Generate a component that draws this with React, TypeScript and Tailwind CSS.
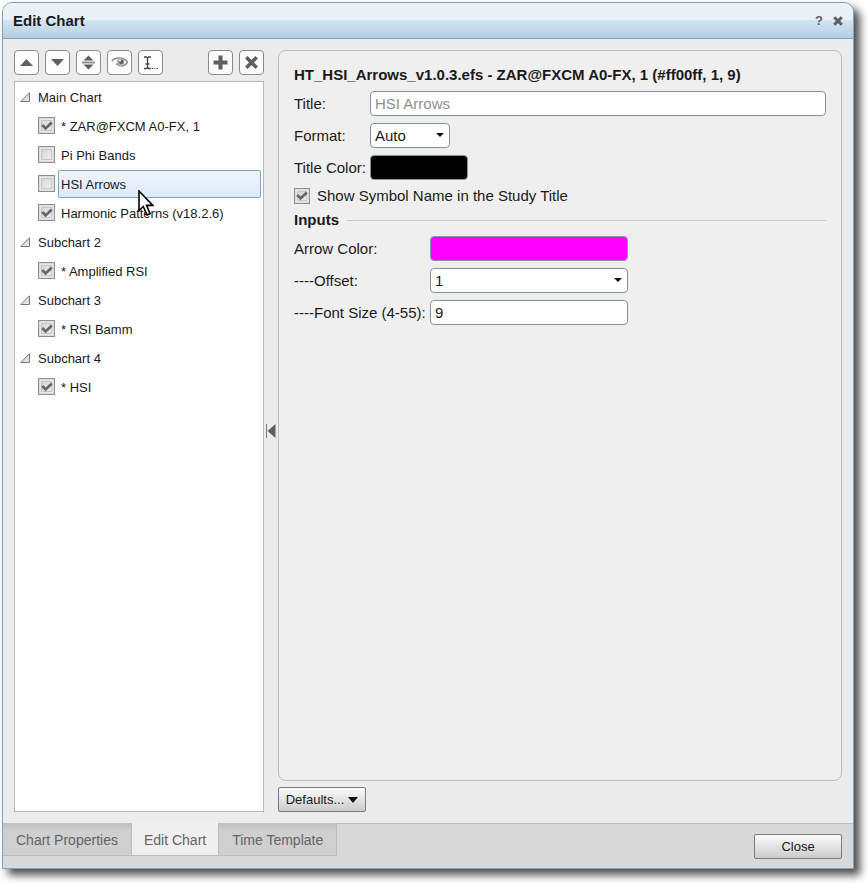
import { useState, type ReactNode } from 'react';

type Study = { name: string; on: boolean; cursor?: boolean };
type Group = { name: string; studies: Study[] };

const groups: Group[] = [
  {
    name: 'Main Chart',
    studies: [
      { name: '* ZAR@FXCM A0-FX, 1', on: true },
      { name: 'Pi Phi Bands', on: false },
      { name: 'HSI Arrows', on: false, cursor: true },
      { name: 'Harmonic Patterns (v18.2.6)', on: true },
    ],
  },
  { name: 'Subchart 2', studies: [{ name: '* Amplified RSI', on: true }] },
  { name: 'Subchart 3', studies: [{ name: '* RSI Bamm', on: true }] },
  { name: 'Subchart 4', studies: [{ name: '* HSI', on: true }] },
];

const fieldClass =
  'block h-[25px] w-full appearance-none rounded-[4px] border border-[#7f93ab] bg-white px-1 text-[15px] leading-5 text-[#1a1a1a] outline-none';

function ToolButton({ label, children }: { label: string; children: ReactNode }) {
  return (
    <button
      type="button"
      aria-label={label}
      className="flex h-[25px] w-[25px] items-center justify-center rounded-[4px] border border-[#8a8a8a] bg-[#fdfdfd] text-[#5f5f66]"
    >
      {children}
    </button>
  );
}

function Check({ id, label, defaultChecked, size }: { id?: string; label?: string; defaultChecked: boolean; size: 'md' | 'sm' }) {
  return (
    <span className="grid shrink-0 place-items-center">
      <input
        id={id}
        type="checkbox"
        aria-label={label}
        defaultChecked={defaultChecked}
        className={
          'peer col-start-1 row-start-1 appearance-none border border-[#8e8f8f] bg-linear-to-br from-[#cfcfcf] to-[#f6f6f6] shadow-[inset_0_0_0_1px_#dcdcdc,inset_0_0_0_2px_#e6e6e6,inset_0_0_0_3px_#c6c6c6] ' +
          (size === 'md' ? 'h-[17px] w-[17px]' : 'h-4 w-4')
        }
      />
      <svg
        width="12"
        height="10"
        viewBox="0 0 12 10"
        className="pointer-events-none invisible col-start-1 row-start-1 peer-checked:visible"
      >
        <path d="M1.2 4L4.6 7.4L10.8 1.4" fill="none" stroke="#66666e" strokeWidth="2.8" />
      </svg>
    </span>
  );
}

function Select({ id, options }: { id: string; options: string[] }) {
  return (
    <div className="grid w-full items-center">
      <select id={id} className={fieldClass + ' col-start-1 row-start-1'}>
        {options.map((o) => (
          <option key={o}>{o}</option>
        ))}
      </select>
      <svg
        width="8"
        height="4"
        viewBox="0 0 8 4"
        className="pointer-events-none col-start-1 row-start-1 mr-1.5 mb-px justify-self-end"
      >
        <path d="M0 0H8L4 4Z" fill="#111" />
      </svg>
    </div>
  );
}

function Swatch({ id, value }: { id: string; value: string }) {
  return (
    <input
      id={id}
      type="color"
      defaultValue={value}
      className="block h-[25px] w-full appearance-none overflow-hidden rounded-[4px] border border-[#7f93ab] p-0 [&::-webkit-color-swatch-wrapper]:p-0 [&::-webkit-color-swatch]:border-0"
    />
  );
}

function Pointer() {
  return (
    <svg width="16" height="26" viewBox="0 0 16 26" className="pointer-events-none absolute top-5 left-20 z-10">
      <path
        d="M1 1V20.5L5.3 16.5L9 25L12 23.6L8.6 15.4H14.8Z"
        fill="#fff"
        stroke="#000"
        strokeWidth="1.6"
      />
    </svg>
  );
}

export default function App() {
  const [selected, setSelected] = useState('HSI Arrows');
  const [tab, setTab] = useState('Edit Chart');

  return (
    <div className="flex h-screen min-h-[480px] bg-white pt-0.5 pr-3.5 pb-3.5 pl-0.5 font-['Liberation_Sans',Arial,sans-serif] text-[#1a1a1a]">
      <div className="flex min-w-0 flex-1 flex-col overflow-hidden rounded-t-[10px] border border-[#7fa3bd] bg-[#ececec] shadow-[6px_6px_8px_rgba(0,0,0,0.7)]">
        <header className="flex h-9 shrink-0 items-center border-b border-[#7fa3bd] bg-[linear-gradient(#ebf3f9_0,#e9f1f8_17px,#d5e5f1_17px,#b2cfe4_100%)] pr-2.5 pl-2.5">
          <h1 className="text-[15px] leading-5 font-bold">Edit Chart</h1>
          <div className="ml-auto flex items-center gap-2.5 text-[#5f5f66]">
            <button type="button" className="text-[13px] leading-5 font-bold">
              ?
            </button>
            <button type="button" aria-label="Close window">
              <svg width="10" height="10" viewBox="0 0 10 10">
                <path d="M1.2 1.2L8.8 8.8M8.8 1.2L1.2 8.8" stroke="currentColor" strokeWidth="3" />
              </svg>
            </button>
          </div>
        </header>

        <main className="flex min-h-0 flex-1 p-[11px]">
          <section className="flex w-[250px] shrink-0 flex-col gap-1.5">
            <div className="flex gap-1.5">
              <ToolButton label="Move up">
                <svg width="13" height="7" viewBox="0 0 13 7">
                  <path d="M0 7L6.5 0L13 7Z" fill="currentColor" />
                </svg>
              </ToolButton>
              <ToolButton label="Move down">
                <svg width="13" height="7" viewBox="0 0 13 7">
                  <path d="M0 0L6.5 7L13 0Z" fill="currentColor" />
                </svg>
              </ToolButton>
              <ToolButton label="Distribute">
                <svg width="13" height="15" viewBox="0 0 13 15">
                  <path d="M1.5 5.5L6.5 0.5L11.5 5.5ZM1.5 9.5L6.5 14.5L11.5 9.5Z" fill="currentColor" />
                  <path d="M0 7.5H13" stroke="#929297" strokeWidth="2" />
                </svg>
              </ToolButton>
              <ToolButton label="Show or hide">
                <svg width="18" height="13" viewBox="0 0 18 13">
                  <path
                    d="M0.8 5C4 1 12 0.6 16.4 5.8C14.8 10.4 9 11.4 5 7.8"
                    fill="none"
                    stroke="#8c8c90"
                    strokeWidth="1.5"
                  />
                  <circle cx="9.6" cy="6" r="3.8" fill="#b4b4b8" />
                  <circle cx="10.2" cy="5.8" r="2.4" fill="#5f5f66" />
                  <circle cx="9" cy="4.6" r="1" fill="#fff" />
                </svg>
              </ToolButton>
              <ToolButton label="Rename">
                <svg width="15" height="14" viewBox="0 0 15 14">
                  <path
                    d="M1 1H3.5L4.5 2L5.5 1H8M4.5 2V12M1 12.5H3.5L4.5 11.5L5.5 12.5H8M2.5 8H6.5"
                    fill="none"
                    stroke="#4a4a4e"
                    strokeWidth="1.4"
                  />
                  <path d="M9 12.5H10.2M11.3 12.5H12.5M13.6 12.5H14.8" stroke="#4a4a4e" strokeWidth="1.2" />
                </svg>
              </ToolButton>
              <div className="ml-auto flex gap-1.5">
                <ToolButton label="Add">
                  <svg width="15" height="15" viewBox="0 0 15 15">
                    <path d="M7.5 0.5V14.5M0.5 7.5H14.5" stroke="currentColor" strokeWidth="4" />
                  </svg>
                </ToolButton>
                <ToolButton label="Remove">
                  <svg width="13" height="13" viewBox="0 0 13 13">
                    <path d="M1.3 1.3L11.7 11.7M11.7 1.3L1.3 11.7" stroke="currentColor" strokeWidth="3.6" />
                  </svg>
                </ToolButton>
              </div>
            </div>

            <ul className="min-h-0 flex-1 border border-[#b9b9b9] bg-white pt-px pr-0.5 pl-[5px] text-[13px] leading-5">
              {groups.map((group) => (
                <li key={group.name}>
                  <div className="flex h-[29px] items-center gap-2">
                    <svg width="10" height="10" viewBox="0 0 10 10" className="mb-0.5">
                      <path d="M0.8 9.5H9.5V0.8Z" fill="#e2e2e2" stroke="#77777c" />
                    </svg>
                    {group.name}
                  </div>
                  <ul>
                    {group.studies.map((study) => (
                      <li key={study.name} className="relative flex h-[29px] items-start gap-[3px] pl-[18px]">
                        <div className="mt-[5px]">
                          <Check label={study.name} defaultChecked={study.on} size="md" />
                        </div>
                        <button
                          type="button"
                          onClick={() => setSelected(study.name)}
                          className={
                            'h-7 flex-1 rounded-[2px] border pt-0.5 pl-0.5 text-left ' +
                            (selected === study.name
                              ? 'border-[#7ea2c8] bg-linear-to-b from-[#eff5fd] to-[#deeafa]'
                              : 'border-transparent')
                          }
                        >
                          {study.name}
                        </button>
                        {study.cursor && (
                          <div className="absolute top-0 left-[38px]">
                            <Pointer />
                          </div>
                        )}
                      </li>
                    ))}
                  </ul>
                </li>
              ))}
            </ul>
          </section>

          <button type="button" aria-label="Collapse list" className="flex w-3.5 shrink-0 items-center justify-center">
            <svg width="10" height="14" viewBox="0 0 10 14">
              <path d="M0.5 0V14" stroke="#77777c" />
              <path d="M9.5 0V14L1.5 7Z" fill="#5f5f66" />
            </svg>
          </button>

          <section className="flex min-w-0 flex-1 flex-col items-start gap-1.5">
            <div className="w-full flex-1 rounded-lg border border-[#bdbdbd] bg-[#efefef] px-[15px] pt-3.5 text-[15px] leading-5">
              <h2 className="font-bold">HT_HSI_Arrows_v1.0.3.efs - ZAR@FXCM A0-FX, 1 (#ff00ff, 1, 9)</h2>
              <div className="mt-1.5 grid grid-cols-[76px_1fr] items-center gap-y-[7px]">
                <label htmlFor="title">Title:</label>
                <input id="title" placeholder="HSI Arrows" className={fieldClass + ' placeholder:text-[#8f8f8f]'} />
                <label htmlFor="format">Format:</label>
                <div className="w-20">
                  <Select id="format" options={['Auto', 'Manual']} />
                </div>
                <label htmlFor="title-color" className="whitespace-nowrap">
                  Title Color:
                </label>
                <div className="w-[98px]">
                  <Swatch id="title-color" value="#000000" />
                </div>
              </div>
              <div className="mt-1.5 flex items-center gap-[7px]">
                <Check id="show-symbol" defaultChecked size="sm" />
                <label htmlFor="show-symbol">Show Symbol Name in the Study Title</label>
              </div>
              <div className="mt-1 flex items-center gap-2">
                <h3 className="font-bold">Inputs</h3>
                <div className="h-px flex-1 bg-[#cbcbcb]" />
              </div>
              <div className="mt-1.5 grid grid-cols-[136px_198px] items-center gap-y-[7px]">
                <label htmlFor="arrow-color">Arrow Color:</label>
                <Swatch id="arrow-color" value="#ff00ff" />
                <label htmlFor="offset">----Offset:</label>
                <Select id="offset" options={['1', '2', '3']} />
                <label htmlFor="font-size" className="whitespace-nowrap">
                  ----Font Size (4-55):
                </label>
                <input id="font-size" defaultValue="9" className={fieldClass} />
              </div>
            </div>
            <button
              type="button"
              className="flex h-[25px] w-[88px] shrink-0 items-center justify-center gap-1 rounded-[2px] border border-[#7c7c7c] bg-linear-to-b from-[#fbfbfb] to-[#cccccc] text-[13px] leading-5"
            >
              Defaults...
              <svg width="10" height="6" viewBox="0 0 10 6">
                <path d="M0 0H10L5 6Z" fill="#111" />
              </svg>
            </button>
          </section>
        </main>

        <footer className="flex h-[45px] shrink-0 items-start border-t border-[#bcbcbc] bg-[#d9d9d9] pr-[11px]">
          <nav className="-mt-px flex text-[14px] leading-5">
            {['Chart Properties', 'Edit Chart', 'Time Template'].map((name) => (
              <button
                key={name}
                type="button"
                onClick={() => setTab(name)}
                className={
                  'h-[33px] border-r border-b border-[#bcbcbc] pt-px text-[#626469] ' +
                  (tab === name
                    ? 'bg-[#efefef] px-3'
                    : 'bg-linear-to-b from-[#c0c0c0] via-[#cfcfcf] via-25% to-[#d0d0d0] px-[13px]')
                }
              >
                {name}
              </button>
            ))}
          </nav>
          <button
            type="button"
            className="mt-2.5 ml-auto h-[25px] w-[88px] rounded-[2px] border border-[#7c7c7c] bg-linear-to-b from-[#fbfbfb] to-[#cccccc] pt-px text-[13px] leading-5"
          >
            Close
          </button>
        </footer>
      </div>
    </div>
  );
}
